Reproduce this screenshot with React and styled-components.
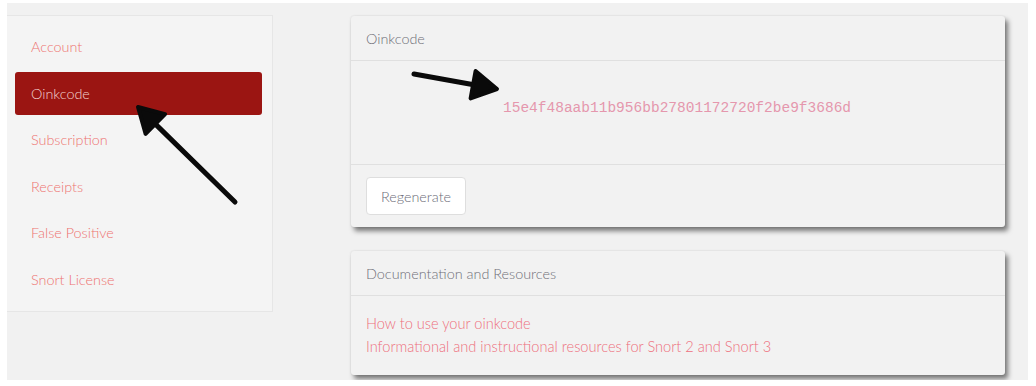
import React from 'react'
import styled, {createGlobalStyle} from 'styled-components'

const GlobalStyle = createGlobalStyle`
body{
    margin: 0;
    background: #ffffff;
    font-family: Lato, "Open Sans", sans-serif;
}
`

const menu = ['Account', 'Oinkcode', 'Subscription', 'Receipts', 'False Positive', 'Snort License']

const Arrow = ({x1, y1, x2, y2}) => {
    const ang = Math.atan2(y2 - y1, x2 - x1)
    const len = 28
    const spread = 0.52
    const p1 = [x2 - len * Math.cos(ang - spread), y2 - len * Math.sin(ang - spread)]
    const p2 = [x2 - len * Math.cos(ang + spread), y2 - len * Math.sin(ang + spread)]
    const bx = x2 - 18 * Math.cos(ang)
    const by = y2 - 18 * Math.sin(ang)
    return (
        <g>
            <line x1={x1} y1={y1} x2={bx} y2={by} stroke="#0a0a0a" strokeWidth="5" strokeLinecap="round" />
            <polygon points={`${x2},${y2} ${p1[0]},${p1[1]} ${p2[0]},${p2[1]}`} fill="#0a0a0a" stroke="#0a0a0a" strokeWidth="4" strokeLinejoin="round" />
        </g>
    )
}

const App = () => {
    return (
        <>
            <GlobalStyle />
            <Page>
                <Sidebar>
                    {menu.map(item => (
                        <MenuItem key={item} $active={item === 'Oinkcode'}>{item}</MenuItem>
                    ))}
                </Sidebar>
                <Main>
                    <Card>
                        <CardHeader>Oinkcode</CardHeader>
                        <CodeBody>
                            <Code>15e4f48aab11b956bb27801172720f2be9f3686d</Code>
                        </CodeBody>
                        <CardFooter>
                            <Button>Regenerate</Button>
                        </CardFooter>
                    </Card>
                    <Card>
                        <CardHeader>Documentation and Resources</CardHeader>
                        <LinkBody>
                            <Link>How to use your oinkcode</Link>
                            <Link>Informational and instructional resources for Snort 2 and Snort 3</Link>
                        </LinkBody>
                    </Card>
                </Main>
                <Overlay width="1036" height="386" viewBox="0 0 1036 386">
                    <Arrow x1={235} y1={202} x2={138} y2={107} />
                    <Arrow x1={414} y1={74} x2={497} y2={89} />
                </Overlay>
            </Page>
        </>
    )
}

const Page = styled.div`
position: relative;
margin: 3px 8px 0 7px;
height: 377px;
background: #f1f1f1;
display: flex;
align-items: flex-start;
gap: 78px;
padding-top: 12px;
box-sizing: border-box;
`

const Sidebar = styled.nav`
width: 266px;
box-sizing: border-box;
background: #f4f4f4;
border: 1px solid #e6e6e6;
border-left: none;
padding: 9px 10px 10px 8px;
display: flex;
flex-direction: column;
gap: 3.6px;
`

const MenuItem = styled.a`
display: flex;
align-items: center;
height: 43px;
padding-left: 16px;
border-radius: 3px;
font-size: 14.4px;
font-weight: 300;
color: ${p => p.$active ? '#f2d2cf' : '#ee7370'};
background: ${p => p.$active ? '#9b1512' : 'transparent'};
cursor: pointer;
`

const Main = styled.div`
width: 654px;
display: flex;
flex-direction: column;
gap: 24px;
margin-top: 1px;
`

const Card = styled.section`
background: #f2f2f2;
border-radius: 3px;
box-shadow: 3px 4px 5px rgba(0,0,0,0.5), 0 0 2px rgba(0,0,0,0.12);
`

const CardHeader = styled.div`
height: 44px;
display: flex;
align-items: center;
padding-left: 15px;
border-bottom: 1px solid #e0e0e0;
font-size: 14.4px;
font-weight: 300;
color: #6f6f78;
`

const CodeBody = styled.div`
height: 104px;
border-bottom: 1px solid #e0e0e0;
padding-left: 152px;
padding-top: 35px;
box-sizing: border-box;
`

const Code = styled.span`
font-family: "Liberation Mono", monospace;
font-size: 14.5px;
color: #e597ad;
`

const CardFooter = styled.div`
height: 62px;
display: flex;
align-items: center;
padding-left: 15px;
`

const Button = styled.button`
width: 100px;
height: 38px;
background: #ffffff;
border: 1px solid #dedede;
border-radius: 4px;
font-family: Lato, "Open Sans", sans-serif;
font-size: 14.4px;
font-weight: 300;
color: #6c6c78;
`

const LinkBody = styled.div`
padding: 16px 15px 17px;
display: flex;
flex-direction: column;
`

const Link = styled.a`
font-size: 14.6px;
font-weight: 300;
line-height: 23px;
color: #ee6f7c;
cursor: pointer;
`

const Overlay = styled.svg`
position: absolute;
left: -7px;
top: -3px;
pointer-events: none;
`

export default App
